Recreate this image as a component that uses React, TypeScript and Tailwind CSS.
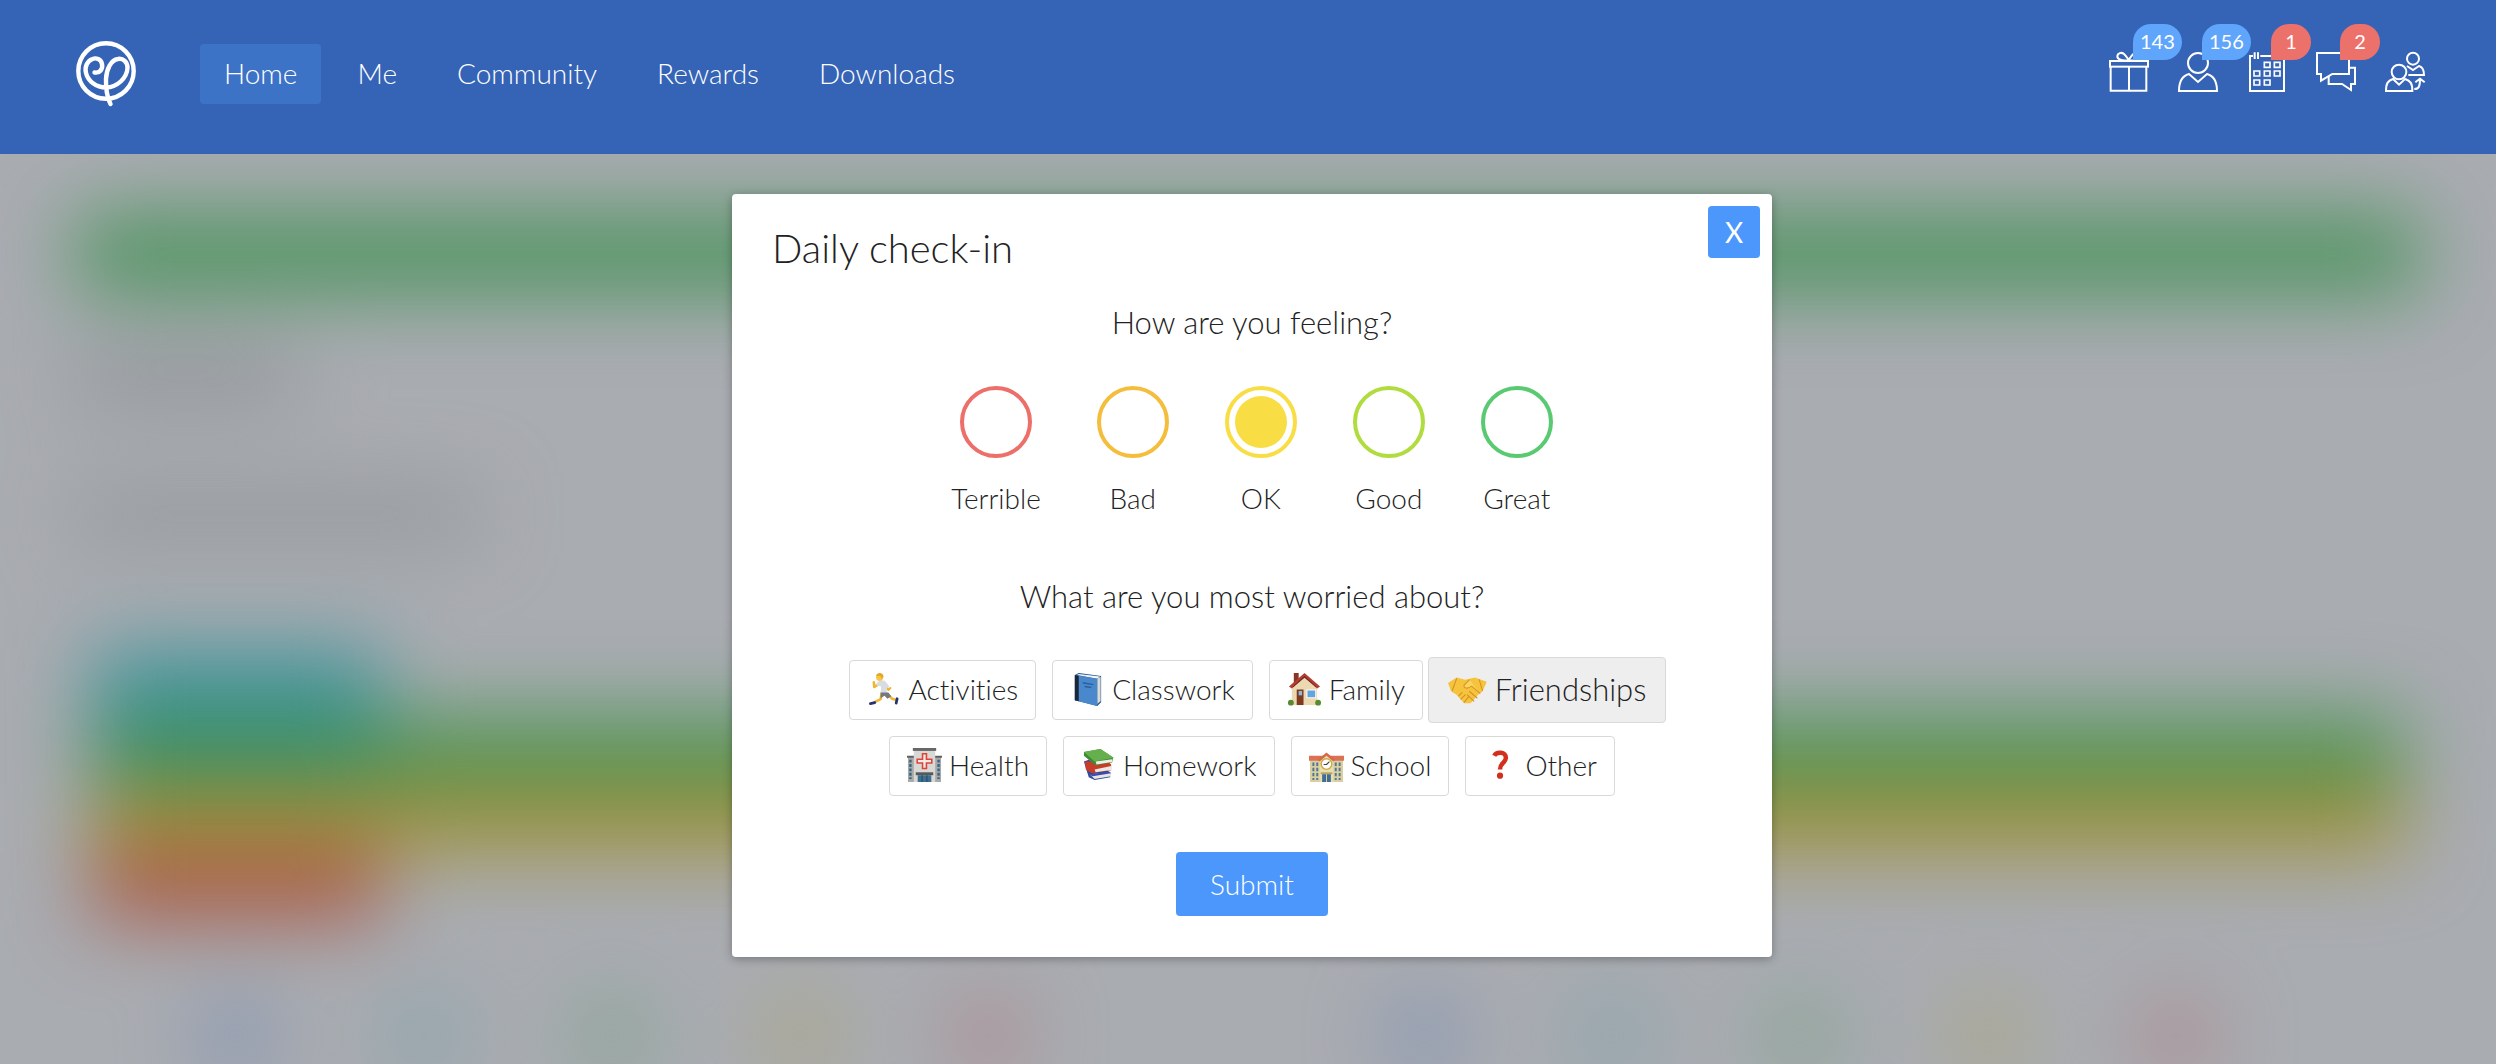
import { useState } from "react";
import type { ReactNode } from "react";
import clsx from "clsx";

const navItems = ["Home", "Me", "Community", "Rewards", "Downloads"];

const moods = [
  { label: "Terrible", ring: "border-[#ed6f6a] checked:bg-[#ed6f6a]" },
  { label: "Bad", ring: "border-[#f5bd3c] checked:bg-[#f5bd3c]" },
  { label: "OK", ring: "border-[#f8de44] checked:bg-[#f8de44]" },
  { label: "Good", ring: "border-[#b1dc3f] checked:bg-[#b1dc3f]" },
  { label: "Great", ring: "border-[#5aca72] checked:bg-[#5aca72]" },
];

const worries = [
  { label: "Activities", icon: <Runner /> },
  { label: "Classwork", icon: <Book /> },
  { label: "Family", icon: <House /> },
  { label: "Friendships", icon: <Handshake /> },
  { label: "Health", icon: <Hospital /> },
  { label: "Homework", icon: <Books /> },
  { label: "School", icon: <School /> },
  { label: "Other", icon: <Question /> },
];

export default function App() {
  return (
    <div className="flex min-h-screen flex-col bg-[#a9acb1] font-['Lato',sans-serif] font-light text-[#222] [font-variant-ligatures:none]">
      <Header />
      <main className="relative flex flex-1 flex-col items-center overflow-hidden pt-10 pl-2">
        <Dashboard />
        <CheckIn />
      </main>
    </div>
  );
}

function Header() {
  return (
    <header className="flex h-[154px] items-start bg-[#3564b7] pr-[71px] pl-[76px] text-white">
      <a href="#" aria-label="Homepage" className="mt-[41px] mr-16">
        <Logo />
      </a>
      <nav className="mt-11 flex gap-3">
        {navItems.map((item, i) => (
          <a
            key={item}
            href="#"
            className={clsx(
              "flex h-[60px] items-center rounded px-6 pb-0.5 text-[28px]",
              i === 0 && "bg-[#3d73c7]",
            )}
          >
            {item}
          </a>
        ))}
      </nav>
      <div className="mt-[52px] ml-auto flex gap-[29px]">
        <IconButton label="Gifts" count={143} tone="bg-[#5fa5fb]">
          <rect x="3" y="27" width="114" height="17" />
          <path d="M5 44V116H112V44M60 44V116M58 24C44 28 26 24 25 14C25 2 38 0 45 6C52 12 55 18 59 24C63 18 66 12 73 6C80 0 93 2 93 14C92 24 74 28 60 24" />
        </IconButton>
        <IconButton label="Friends" count={156} tone="bg-[#5fa5fb]">
          <circle cx="60" cy="33" r="30" />
          <path d="M3 117C3 90 10 72 33 66L60 90L87 66C110 72 117 90 117 117Z" />
        </IconButton>
        <IconButton label="Calendar" count={1} tone="bg-[#ed716b]">
          <path d="M18 12H9V117H111V12H40M23 1V21M33 1V21" />
          <path
            strokeWidth="5"
            d="M52 31H69V46H52ZM82 31H99V46H82ZM21 57H38V72H21ZM52 57H69V72H52ZM82 57H99V72H82ZM21 84H38V99H21ZM52 84H69V99H52Z"
          />
        </IconButton>
        <IconButton label="Messages" count={2} tone="bg-[#ed716b]">
          <path d="M3 3H99V66H49L15 86V66H3Z" />
          <path d="M101 47H117V96H105V114L78 96H38V72" />
        </IconButton>
        <IconButton label="Switch account">
          <circle cx="84" cy="20" r="18" />
          <path d="M66 42L84 54L102 42C113 45 117 53 117 69H70" />
          <circle cx="42" cy="60" r="22" />
          <path d="M3 117C3 95 8 86 24 81L42 98L60 81C77 86 82 95 82 117Z" />
          <path d="M88 111C102 111 105 102 105 82M91 91L105 80L119 91" />
        </IconButton>
      </div>
    </header>
  );
}

function IconButton({
  label,
  count,
  tone,
  children,
}: {
  label: string;
  count?: number;
  tone?: string;
  children: ReactNode;
}) {
  return (
    <button type="button" aria-label={label} className="relative size-10">
      <svg
        viewBox="0 0 120 120"
        className="size-10 overflow-visible"
        fill="none"
        stroke="currentColor"
        strokeWidth="6"
      >
        {children}
      </svg>
      {count !== undefined && (
        <span
          className={clsx(
            "absolute bottom-8 left-6 flex h-9 min-w-10 items-center justify-center rounded-full rounded-bl-none px-[7px] pb-0.5 text-xl font-normal",
            tone,
          )}
        >
          {count}
        </span>
      )}
    </button>
  );
}

function CheckIn() {
  const [mood, setMood] = useState("OK");
  const [worry, setWorry] = useState("Friendships");

  return (
    <form
      role="dialog"
      aria-labelledby="checkin-title"
      onSubmit={(e) => e.preventDefault()}
      className="relative w-full max-w-[1040px] rounded bg-white px-10 pt-[30px] pb-[41px] shadow-[0_2px_10px_rgba(0,0,0,0.3)]"
    >
      <button
        type="button"
        aria-label="Close"
        className="absolute top-3 right-3 flex size-[52px] items-center justify-center rounded bg-[#4c97fb] text-[28px] font-normal text-white"
      >
        X
      </button>
      <h1 id="checkin-title" className="text-[40px] leading-[48px]">
        Daily check-in
      </h1>

      <fieldset className="mt-[30px]">
        <legend className="w-full text-center text-[31px] leading-10">
          How are you feeling?
        </legend>
        <div className="mt-11 flex justify-center gap-14">
          {moods.map((m) => (
            <label
              key={m.label}
              className="flex min-w-[72px] flex-col items-center gap-[22px] text-[28px] leading-9"
            >
              <input
                type="radio"
                name="mood"
                checked={mood === m.label}
                onChange={() => setMood(m.label)}
                className={clsx(
                  "size-[72px] appearance-none rounded-full border-4 bg-clip-content p-1.5",
                  m.ring,
                )}
              />
              {m.label}
            </label>
          ))}
        </div>
      </fieldset>

      <h2 className="mt-[60px] text-center text-[31px] leading-10">
        What are you most worried about?
      </h2>
      <div className="mt-11 flex flex-wrap justify-center gap-4">
        {worries.map((w) => (
          <button
            key={w.label}
            type="button"
            aria-pressed={worry === w.label}
            onClick={() => setWorry(w.label)}
            className={clsx(
              "flex items-center rounded border border-[#d9d9d9] pb-0.5",
              worry === w.label
                ? "-mx-[11px] -my-[3px] h-[66px] gap-2 bg-[#eee] px-[19px] text-[31px]"
                : "h-[60px] gap-[7px] px-[17px] text-[28px]",
            )}
          >
            {w.icon}
            {w.label}
          </button>
        ))}
      </div>

      <div className="mt-14 flex justify-center">
        <button
          type="submit"
          className="h-16 w-[152px] rounded bg-[#4c97fb] text-[28px] text-white"
        >
          Submit
        </button>
      </div>
    </form>
  );
}

/* Blurred page behind the dialog */
function Dashboard() {
  return (
    <div
      aria-hidden="true"
      className="absolute inset-0 flex flex-col px-[76px] pt-[60px] blur-[40px]"
    >
      <div className="h-20 shrink-0 bg-[#4e945f]" />
      <div className="mt-16 h-10 w-[220px] shrink-0 bg-[#8b8f92]" />
      <div className="mt-[96px] h-10 w-[400px] shrink-0 bg-[#8f9296]" />
      <div className="mt-[114px] ml-4 flex shrink-0 flex-col">
        <div className="h-[68px] w-[290px] bg-[#43959d]" />
        <div className="flex h-[68px]">
          <div className="w-[290px] bg-[#3a8f60]" />
          <div className="mr-4 flex-1 bg-[#4a9455]" />
        </div>
        <div className="mr-4 h-[68px] bg-[#a3913a]" />
        <div className="h-[68px] w-[290px] bg-[#aa5a4b]" />
      </div>
      <div className="mt-20 flex shrink-0 gap-[364px] pl-[124px]">
        <DotRow />
        <DotRow />
      </div>
    </div>
  );
}

function DotRow() {
  return (
    <div className="flex gap-[116px]">
      <span className="size-[72px] rounded-full bg-[#8292b3]" />
      <span className="size-[72px] rounded-full bg-[#84a3aa]" />
      <span className="size-[72px] rounded-full bg-[#82a38e]" />
      <span className="size-[72px] rounded-full bg-[#aaa57e]" />
      <span className="size-[72px] rounded-full bg-[#ad868a]" />
    </div>
  );
}

function Logo() {
  return (
    <svg
      viewBox="0 0 60 66"
      className="h-[66px] w-[60px]"
      fill="none"
      stroke="currentColor"
      strokeWidth="4.4"
      strokeLinecap="round"
    >
      <circle cx="30" cy="30" r="27.7" />
      <path d="M18.5 31.5C24 32.5 27 28 26 23C25 18 20 16.5 16.5 18C11 20 8.5 26 10 32C12 40 20 46.5 30 46.5C41 46.5 51 37 51.5 27C51.7 21 47 17 42 18C35 19 30.5 28 30 38C29.7 48 31 56 34.5 63" />
    </svg>
  );
}

function Emoji({ children }: { children: ReactNode }) {
  return (
    <svg viewBox="0 0 36 36" className="size-[1.25em] shrink-0" aria-hidden="true">
      {children}
    </svg>
  );
}

function Runner() {
  return (
    <Emoji>
      <g fill="none" strokeLinecap="round" strokeLinejoin="round">
        <path d="M7 10.5L7.5 15.5L12 12.5" stroke="#f0b52e" strokeWidth="2.6" />
        <path d="M20 15L22 18.5L24 16.5" stroke="#f0b52e" strokeWidth="2.2" />
        <path d="M15 22L14 28L8 31" stroke="#f3b62f" strokeWidth="2.6" />
        <path d="M22 24L26 27.5L29.5 28.5" stroke="#f3b62f" strokeWidth="2.6" />
        <path d="M8 31.5L3.5 32.5" stroke="#27336e" strokeWidth="2.8" />
        <path d="M31 27.5L30 32" stroke="#27336e" strokeWidth="2.8" />
      </g>
      <path d="M11 10C14 8 18 8 20 11L23 15L20 17L21 22L14 22L14.5 15L9.5 14Z" fill="#d9dce2" />
      <path d="M14 21L22 21L25 25L21 27.5L18 24.5L14 27Z" fill="#77797d" />
      <circle cx="13" cy="5.5" r="3.7" fill="#f7c744" />
      <path d="M9.5 4C10 0 17 0 17 5L15 7L14 4Z" fill="#e3a62c" />
    </Emoji>
  );
}

function Book() {
  return (
    <Emoji>
      <path d="M5 3L9 1L32 4V31L28 35L5 29Z" fill="#24528c" />
      <path d="M9 2L31 4.5L28 7L7 3Z" fill="#f4f4f0" />
      <path d="M28 7L31.5 5V30L28 33Z" fill="#d9dad7" />
      <path d="M5 3L28 7V35L5 29Z" fill="#4a88cd" />
      <path d="M5 3L9 4V30L5 29Z" fill="#1b2734" />
      <path d="M13 11L24 13M15 15L22 16" stroke="#2c5f9e" strokeWidth="1.5" />
    </Emoji>
  );
}

function House() {
  return (
    <Emoji>
      <path d="M7 1H12V12H7Z" fill="#8c3327" />
      <path d="M5 14L18 2L31 14V34H5Z" fill="#ecd9b1" />
      <path d="M18 1L34 15L31 17L18 5L5 17L2 15Z" fill="#b53c30" />
      <path d="M18 4L30 15V16L18 6L6 16V15Z" fill="#6c2820" />
      <path d="M10 18H17V34H10Z" fill="#7d3c22" />
      <path d="M12 19.5H15.5V24H12Z" fill="#90b9db" />
      <path d="M20 18H30V27H20Z" fill="#fff" />
      <path d="M21 19H29V26H21Z" fill="#64a5dd" />
      <circle cx="4" cy="31.5" r="3" fill="#568b31" />
      <circle cx="32" cy="31.5" r="3" fill="#568b31" />
    </Emoji>
  );
}

function Handshake() {
  return (
    <Emoji>
      <path d="M0 12L8 7L16 9L25 7L36 11L32 20L28 23L21 31L15 31L8 23L3 20Z" fill="#f6c33c" />
      <path d="M20 9L15 14C14 17 18 18 22 15L30 22" fill="#fbd55a" stroke="#d5912a" strokeWidth="1" />
      <path
        d="M10 24L13 21M12 27L16 23M15 30L19 25M20 20L27 26M18 23L24 29M8 8L4 19M29 9L32 19"
        fill="none"
        stroke="#d5912a"
        strokeWidth="1"
        strokeLinecap="round"
      />
    </Emoji>
  );
}

function Hospital() {
  return (
    <Emoji>
      <path d="M1 9H35V35H1Z" fill="#a9a9a7" />
      <path d="M0 8H36V10H0Z" fill="#5e6062" />
      <path d="M7 2H29V35H7Z" fill="#d9d8d4" />
      <path d="M6 0H30V3H6Z" fill="#65676a" />
      <path d="M3.5 12V32M32.5 12V32" stroke="#376787" strokeWidth="2.5" strokeDasharray="3 1.5" />
      <path
        d="M16 6H20V11.5H25.5V15.5H20V21H16V15.5H10.5V11.5H16Z"
        fill="#f6e9e6"
        stroke="#dc443a"
        strokeWidth="1.6"
      />
      <path d="M9 25H27V28H9Z" fill="#56585a" />
      <path d="M11 28H25V35H11Z" fill="#3e6f91" />
      <path d="M15.5 28V35M20.5 28V35" stroke="#25455c" />
    </Emoji>
  );
}

function Books() {
  return (
    <Emoji>
      <path d="M3 14L8 12L30 25V30L14 33L8 30Z" fill="#35499e" />
      <path d="M9 27L31 25V29L14 32Z" fill="#e8e6e0" />
      <path d="M8 27L29 24.5L31 26L12 29Z" fill="#3a4dab" />
      <path d="M4 14L28 14L31 17V23L11 26L5 22Z" fill="#c93c27" />
      <path d="M14 22L31 18.5V22.5L15 25Z" fill="#ece9e2" />
      <path d="M3 4L20 1L33 10L32 15L15 18L3 8Z" fill="#3e8a36" />
      <path d="M15 14L32 11.5V14.5L16 17Z" fill="#efede6" />
      <path d="M3 4L20 1L34 10L14 14Z" fill="#65b04d" />
    </Emoji>
  );
}

function School() {
  return (
    <Emoji>
      <path d="M1 12H35V35H1Z" fill="#d9cfa0" />
      <path d="M0 8H36V13H0Z" fill="#db7255" />
      <path d="M11 12L18 6L25 12V35H11Z" fill="#e9deb1" />
      <path d="M9 12L18 4.5L27 12L25 14L18 8L11 14Z" fill="#d76848" />
      <path
        d="M4.5 15V33M8.5 15V33M27.5 15V33M31.5 15V33"
        stroke="#517592"
        strokeWidth="2"
        strokeDasharray="3.5 1.8"
      />
      <circle cx="18" cy="16.5" r="5.5" fill="#fff" stroke="#c8ac43" strokeWidth="1.5" />
      <path d="M18 17L21 14M18 17H15" stroke="#444" strokeWidth="1.2" />
      <path d="M12 25H24V27H12Z" fill="#b7a362" />
      <path d="M13.5 27H22.5V35H13.5Z" fill="#3f6f97" />
      <path d="M18 27V35" stroke="#e0cf93" />
    </Emoji>
  );
}

function Question() {
  return (
    <Emoji>
      <path
        d="M11.5 8C14 3.5 24 3.5 23.5 10.5C23 16 17.5 15 17.5 22"
        fill="none"
        stroke="#d3301c"
        strokeWidth="4.6"
      />
      <circle cx="17.5" cy="28.5" r="3.2" fill="#d3301c" />
    </Emoji>
  );
}
